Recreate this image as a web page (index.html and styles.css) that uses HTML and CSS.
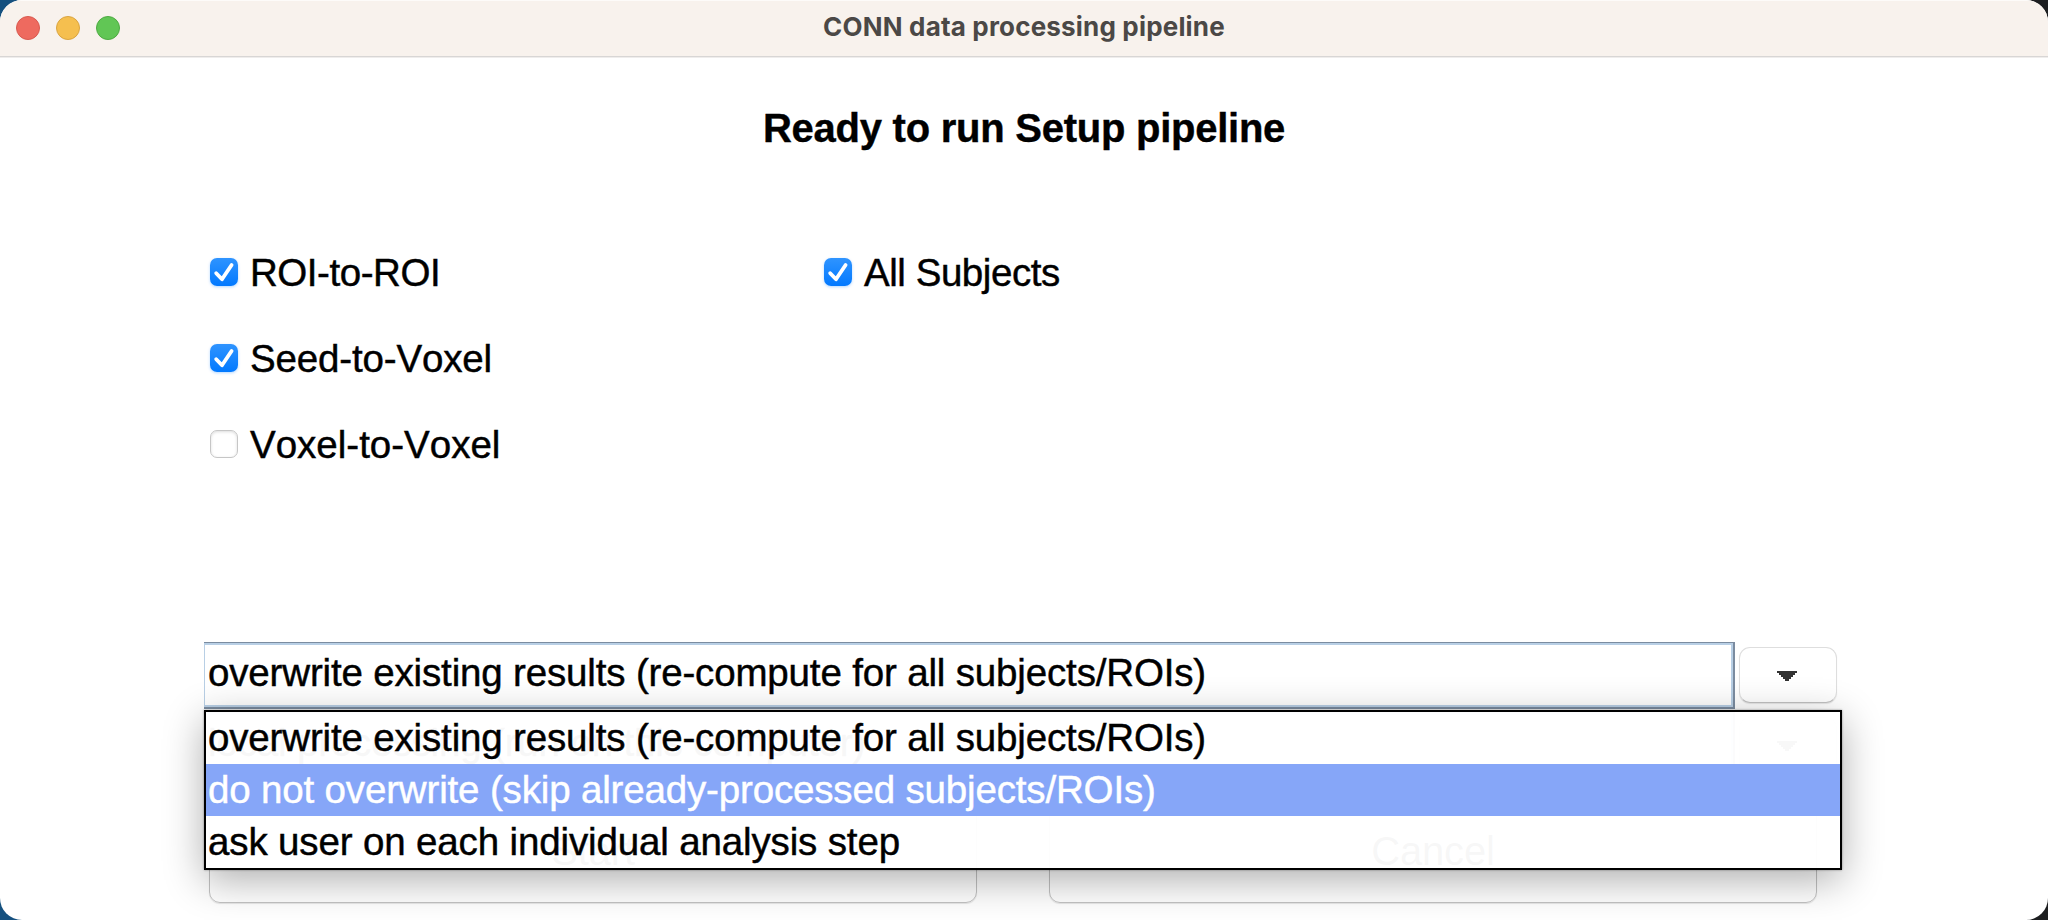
FILE: index.html
```html
<!DOCTYPE html>
<html lang="en">
<head>
<meta charset="utf-8">
<title>CONN data processing pipeline</title>
<link rel="stylesheet" href="styles.css">
</head>
<body>
<div class="window">
  <header class="titlebar">
    <div class="lights"><span class="light red"></span><span class="light yellow"></span><span class="light green"></span></div>
    <span class="title">CONN data processing pipeline</span>
  </header>
  <main class="content">
    <h1 class="heading">Ready to run Setup pipeline</h1>
    <section class="options">
      <div class="column">
        <div class="check"><span class="box on"><svg viewBox="0 0 28 28"><path d="M6.2 15.2 12 21.3 21.6 7"/></svg></span><span class="label tight">ROI-to-ROI</span></div>
        <div class="check"><span class="box on"><svg viewBox="0 0 28 28"><path d="M6.2 15.2 12 21.3 21.6 7"/></svg></span><span class="label">Seed-to-Voxel</span></div>
        <div class="check"><span class="box"></span><span class="label loose">Voxel-to-Voxel</span></div>
      </div>
      <div class="column">
        <div class="check"><span class="box on"><svg viewBox="0 0 28 28"><path d="M6.2 15.2 12 21.3 21.6 7"/></svg></span><span class="label tight">All Subjects</span></div>
      </div>
    </section>
    <section class="selects">
      <div class="combo">
        <div class="field"><div class="value">overwrite existing results (re-compute for all subjects/ROIs)</div></div>
        <div class="arrow"><svg viewBox="0 0 20 10"><path d="M0 0H20V2H18V4H16V6H14V8H12V10H8V8H6V6H4V4H2V2H0Z"/></svg></div>
      </div>
      <div class="combo">
        <div class="field"><div class="value">local processing (run on this computer)</div></div>
        <div class="arrow"><svg viewBox="0 0 20 10"><path d="M0 0H20V2H18V4H16V6H14V8H12V10H8V8H6V6H4V4H2V2H0Z"/></svg></div>
      </div>
      <div class="popup">
        <div class="item">overwrite existing results (re-compute for all subjects/ROIs)</div>
        <div class="item selected">do not overwrite (skip already-processed subjects/ROIs)</div>
        <div class="item last">ask user on each individual analysis step</div>
      </div>
    </section>
    <section class="actions">
      <div class="button">Start</div>
      <div class="button">Cancel</div>
    </section>
  </main>
</div>
</body>
</html>
```
FILE: styles.css
```css
* { box-sizing: border-box; }
body {
  margin: 0;
  width: 2048px;
  height: 920px;
  overflow: hidden;
  background: linear-gradient(90deg, #15507f 50%, #1c1e20 50%);
  font-family: "Liberation Sans", Arial, sans-serif;
  font-size: 38.5px;
  letter-spacing: -0.16px;
  font-kerning: none;
  color: #000;
}
.window {
  display: flex;
  flex-direction: column;
  height: 920px;
  border-radius: 22px;
  background: #fff;
  overflow: hidden;
}
.titlebar {
  display: grid;
  grid-template-columns: 200px 1fr 200px;
  height: 58px;
  flex: none;
  background: #f8f2ed;
  border-top: 1px solid #fdfbf9;
  border-bottom: 1px solid #efedec;
  box-shadow: inset 0 -1px #d8d6d5;
}
.lights { display: flex; gap: 16px; padding: 15px 0 0 16px; }
.light { width: 24px; height: 24px; border-radius: 50%; border: 1px solid; }
.red { background: #ee6a5f; border-color: #d85a50; }
.yellow { background: #f5bf4f; border-color: #d9a441; }
.green { background: #61c655; border-color: #4eaa42; }
.title {
  text-align: center;
  font: 700 26px/51px Inter, sans-serif;
  letter-spacing: 0.18px;
  color: #4b4846;
}
.content { flex: 1; padding-top: 30px; }
.heading {
  margin: 0;
  height: 141px;
  text-align: center;
  font-size: 40px;
  line-height: 80px;
  font-weight: 700;
  letter-spacing: -0.25px;
  -webkit-text-stroke: 0.4px;
}
.options { display: grid; grid-template-columns: 614px 1fr; padding-left: 210px; height: 413px; }
.check { display: flex; align-items: center; gap: 12px; height: 86px; }
.box {
  width: 28px;
  height: 28px;
  border-radius: 7px;
  border: 1px solid #c6c6c6;
  box-shadow: inset 0 1px 3px rgba(0,0,0,.14);
}
.box.on {
  border: 0;
  background: linear-gradient(#2f94ff, #0279ff);
  box-shadow: 0 1px 3px rgba(0,122,255,.3);
}
.box svg { display: block; fill: none; stroke: #fff; stroke-width: 3.8; stroke-linecap: round; stroke-linejoin: round; }
.label, .item, .value { -webkit-text-stroke: 0.45px; }
.label { line-height: 44px; padding-top: 1px; }
.tight { letter-spacing: -0.45px; }
.loose { letter-spacing: 0; }
.selects { position: relative; height: 160px; padding-left: 204px; }
.combo { display: flex; gap: 4px; height: 70px; align-items: flex-start; }
.field {
  width: 1531px;
  height: 67px;
  border: solid #7b8ca0;
  border-width: 1px 2px 2px 0;
}
.value {
  height: 64px;
  border: 2px solid #b8cfe5;
  border-left-width: 1px;
  padding-left: 3px;
  line-height: 56px;
  white-space: nowrap;
}
.arrow {
  width: 98px;
  height: 56px;
  margin-top: 5px;
  padding: 23px 0 0 37px;
  border: 1px solid #dedede;
  border-bottom-color: #c2c2c2;
  border-radius: 11px;
  box-shadow: 0 1px 1px rgba(0,0,0,.1);
}
.arrow svg { display: block; width: 20px; height: 10px; fill: #333; shape-rendering: crispEdges; }
.popup {
  position: absolute;
  left: 204px;
  top: 68px;
  z-index: 2;
  width: 1638px;
  height: 160px;
  border: 2px solid #000;
  background: rgba(255,255,255,.97);
  box-shadow: 0 10px 38px rgba(0,0,0,.32), 0 0 2px rgba(0,0,0,.4);
}
.item { height: 52px; padding-left: 2px; line-height: 52px; white-space: nowrap; }
.selected { background: rgba(130,163,248,.97); color: #fff; }
.last { letter-spacing: -0.14px; }
.actions { display: grid; grid-template-columns: 768px 768px; gap: 72px; padding-left: 209px; }
.button {
  height: 101px;
  text-align: center;
  font-size: 40px;
  line-height: 96px;
  border: 1px solid #c3c3c3;
  border-radius: 11px;
  box-shadow: 0 1px 1px rgba(0,0,0,.1);
}
```
